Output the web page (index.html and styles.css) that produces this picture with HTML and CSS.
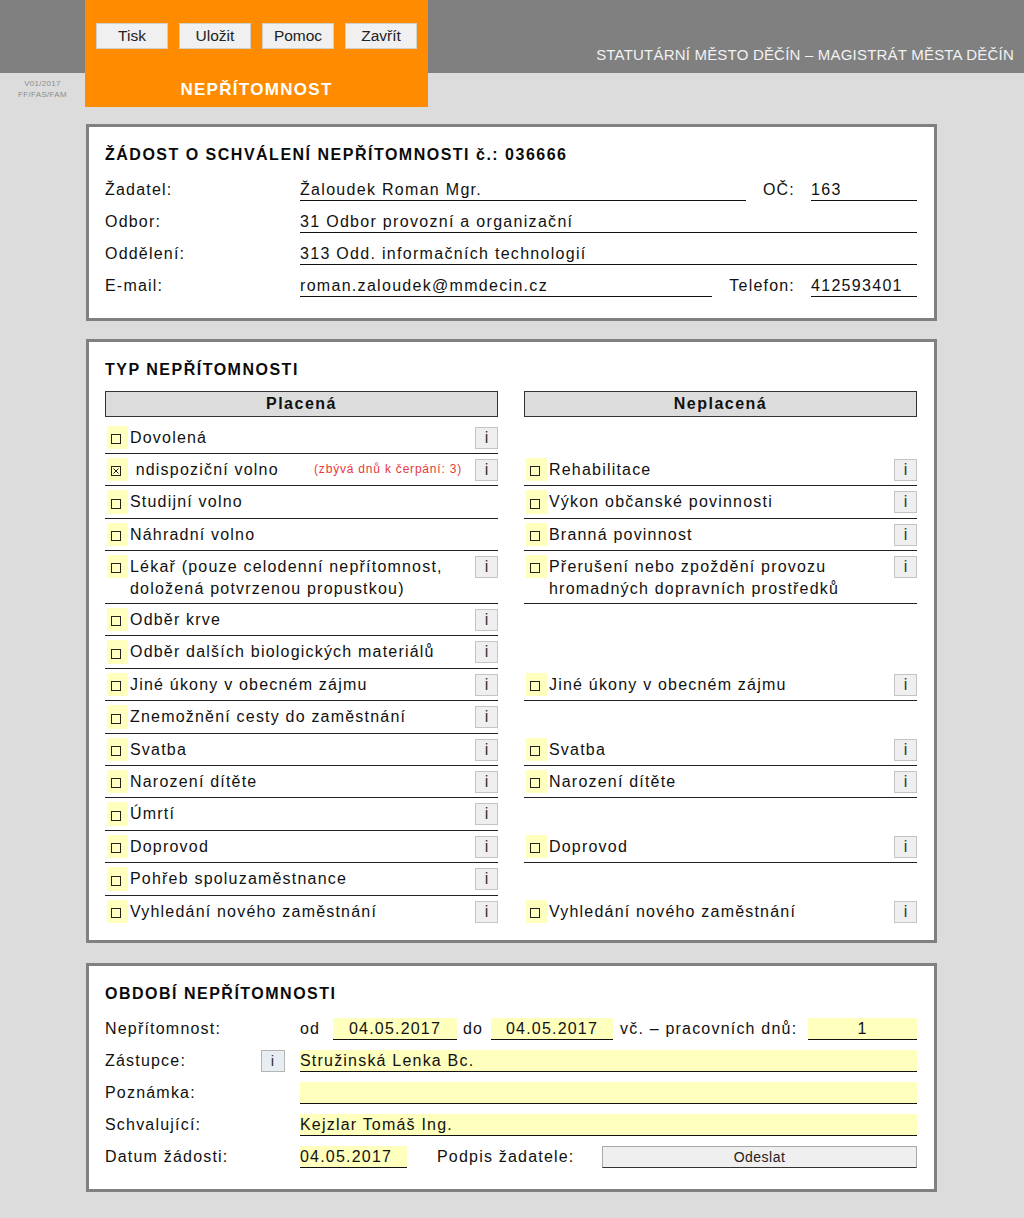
FILE: index.html
```html
<!DOCTYPE html>
<html lang="cs">
<head>
<meta charset="utf-8">
<title>Nepřítomnost</title>
<link rel="stylesheet" href="styles.css">
</head>
<body>
<header class="top">
  <div class="version">V01/2017<br>FF/FAS/FAM</div>
  <div class="appbox">
    <div class="toolbar">
      <button class="tbtn">Tisk</button>
      <button class="tbtn">Uložit</button>
      <button class="tbtn">Pomoc</button>
      <button class="tbtn">Zavřít</button>
    </div>
    <div class="apptitle">NEPŘÍTOMNOST</div>
  </div>
  <div class="org">STATUTÁRNÍ MĚSTO DĚČÍN – MAGISTRÁT MĚSTA DĚČÍN</div>
</header>

<main class="content">
  <section class="card card-request">
    <h2 class="card-title">ŽÁDOST O SCHVÁLENÍ NEPŘÍTOMNOSTI č.: 036666</h2>
    <div class="rows">
      <div class="frow"><span class="flabel">Žadatel:</span><span class="fval">Žaloudek Roman Mgr.</span><span class="slabel">OČ:</span><span class="fval sval">163</span></div>
      <div class="frow"><span class="flabel">Odbor:</span><span class="fval">31 Odbor provozní a organizační</span></div>
      <div class="frow"><span class="flabel">Oddělení:</span><span class="fval">313 Odd. informačních technologií</span></div>
      <div class="frow"><span class="flabel">E-mail:</span><span class="fval">roman.zaloudek@mmdecin.cz</span><span class="slabel">Telefon:</span><span class="fval sval">412593401</span></div>
    </div>
  </section>

  <section class="card card-types">
    <h2 class="card-title">TYP NEPŘÍTOMNOSTI</h2>
    <div class="types">
      <div class="colhead">Placená</div>
      <div class="colhead">Neplacená</div>

      <div class="opt"><span class="cb"><i class="box"></i></span><span class="otext">Dovolená</span><span class="info">i</span></div>
      <div class="opt empty"></div>

      <div class="opt"><span class="cb"><svg class="boxx" width="10" height="10" viewBox="0 0 10 10"><rect x="0.5" y="0.5" width="9" height="9" fill="none" stroke="#222"/><path d="M2.5 2.5L7.5 7.5M7.5 2.5L2.5 7.5" stroke="#222" stroke-width="1"/></svg></span><span class="otext">&nbsp;ndispoziční volno</span><span class="note">(zbývá dnů k čerpání: 3)</span><span class="info">i</span></div>
      <div class="opt"><span class="cb"><i class="box"></i></span><span class="otext">Rehabilitace</span><span class="info">i</span></div>

      <div class="opt"><span class="cb"><i class="box"></i></span><span class="otext">Studijní volno</span></div>
      <div class="opt"><span class="cb"><i class="box"></i></span><span class="otext">Výkon občanské povinnosti</span><span class="info">i</span></div>

      <div class="opt"><span class="cb"><i class="box"></i></span><span class="otext">Náhradní volno</span></div>
      <div class="opt"><span class="cb"><i class="box"></i></span><span class="otext">Branná povinnost</span><span class="info">i</span></div>

      <div class="opt"><span class="cb"><i class="box"></i></span><span class="otext">Lékař (pouze celodenní nepřítomnost,<br>doložená potvrzenou propustkou)</span><span class="info">i</span></div>
      <div class="opt"><span class="cb"><i class="box"></i></span><span class="otext">Přerušení nebo zpoždění provozu<br>hromadných dopravních prostředků</span><span class="info">i</span></div>

      <div class="opt"><span class="cb"><i class="box"></i></span><span class="otext">Odběr krve</span><span class="info">i</span></div>
      <div class="opt empty"></div>

      <div class="opt"><span class="cb"><i class="box"></i></span><span class="otext">Odběr dalších biologických materiálů</span><span class="info">i</span></div>
      <div class="opt empty"></div>

      <div class="opt"><span class="cb"><i class="box"></i></span><span class="otext">Jiné úkony v obecném zájmu</span><span class="info">i</span></div>
      <div class="opt"><span class="cb"><i class="box"></i></span><span class="otext">Jiné úkony v obecném zájmu</span><span class="info">i</span></div>

      <div class="opt"><span class="cb"><i class="box"></i></span><span class="otext">Znemožnění cesty do zaměstnání</span><span class="info">i</span></div>
      <div class="opt empty"></div>

      <div class="opt"><span class="cb"><i class="box"></i></span><span class="otext">Svatba</span><span class="info">i</span></div>
      <div class="opt"><span class="cb"><i class="box"></i></span><span class="otext">Svatba</span><span class="info">i</span></div>

      <div class="opt"><span class="cb"><i class="box"></i></span><span class="otext">Narození dítěte</span><span class="info">i</span></div>
      <div class="opt"><span class="cb"><i class="box"></i></span><span class="otext">Narození dítěte</span><span class="info">i</span></div>

      <div class="opt"><span class="cb"><i class="box"></i></span><span class="otext">Úmrtí</span><span class="info">i</span></div>
      <div class="opt empty"></div>

      <div class="opt"><span class="cb"><i class="box"></i></span><span class="otext">Doprovod</span><span class="info">i</span></div>
      <div class="opt"><span class="cb"><i class="box"></i></span><span class="otext">Doprovod</span><span class="info">i</span></div>

      <div class="opt"><span class="cb"><i class="box"></i></span><span class="otext">Pohřeb spoluzaměstnance</span><span class="info">i</span></div>
      <div class="opt empty"></div>

      <div class="opt last"><span class="cb"><i class="box"></i></span><span class="otext">Vyhledání nového zaměstnání</span><span class="info">i</span></div>
      <div class="opt last"><span class="cb"><i class="box"></i></span><span class="otext">Vyhledání nového zaměstnání</span><span class="info">i</span></div>
    </div>
  </section>

  <section class="card card-period">
    <h2 class="card-title">OBDOBÍ NEPŘÍTOMNOSTI</h2>
    <div class="rows">
      <div class="frow prow">
        <span class="flabel">Nepřítomnost:</span>
        <span class="word w-od">od</span>
        <span class="yfield date1">04.05.2017</span>
        <span class="word w-do">do</span>
        <span class="yfield date2">04.05.2017</span>
        <span class="word w-vc">vč. – pracovních dnů:</span>
        <span class="yfield days">1</span>
      </div>
      <div class="frow prow">
        <span class="flabel labbtn">Zástupce:<span class="info info2">i</span></span>
        <span class="yfield grow">Stružinská Lenka Bc.</span>
      </div>
      <div class="frow prow">
        <span class="flabel">Poznámka:</span>
        <span class="yfield grow">&nbsp;</span>
      </div>
      <div class="frow prow">
        <span class="flabel">Schvalující:</span>
        <span class="yfield grow">Kejzlar Tomáš Ing.</span>
      </div>
      <div class="frow prow">
        <span class="flabel">Datum žádosti:</span>
        <span class="yfield date3">04.05.2017</span>
        <span class="word w-sig">Podpis žadatele:</span>
        <button class="send">Odeslat</button>
      </div>
    </div>
  </section>
</main>
</body>
</html>
```

FILE: styles.css
```css
* { box-sizing: border-box; }
html, body { margin: 0; padding: 0; }
body {
  background: #dcdcdc;
  font-family: "Liberation Sans", Arial, sans-serif;
  font-size: 16px;
  color: #111;
}

/* ---------- header ---------- */
.top {
  display: grid;
  grid-template-columns: 85px 343px 1fr;
  grid-template-rows: 73px 34px;
  background: linear-gradient(to bottom, #808080 0, #808080 73px, #dcdcdc 73px);
}
.version {
  grid-column: 1;
  grid-row: 2;
  text-align: center;
  font-size: 8px;
  line-height: 10.5px;
  padding-top: 6px;
  color: #8c8c8c;
  letter-spacing: 0.3px;
}
.appbox {
  grid-column: 2;
  grid-row: 1 / span 2;
  background: #ff8c00;
  padding: 23px 11px 0;
}
.toolbar { display: flex; gap: 11px; }
.tbtn {
  width: 72px;
  height: 26px;
  padding: 0;
  background: #f0f0f0;
  border: 1px solid #cfcfcf;
  font-family: "Liberation Sans", Arial, sans-serif;
  font-size: 15.5px;
  color: #222;
}
.apptitle {
  margin-top: 31px;
  text-align: center;
  color: #fff;
  font-weight: bold;
  font-size: 17px;
  line-height: 20px;
  letter-spacing: 1.3px;
}
.org {
  grid-column: 3;
  grid-row: 1;
  align-self: end;
  text-align: right;
  color: #f2f2f2;
  font-size: 15px;
  line-height: 18px;
  letter-spacing: 0.2px;
  padding: 0 10px 9px 0;
}

/* ---------- cards ---------- */
.content { margin-left: 86px; width: 851px; padding-bottom: 20px; }
.card {
  background: #fff;
  border: 3px solid #808080;
  padding: 18px 17px 21px 16px;
}
.card-request { margin-top: 17px; }
.card-types { margin-top: 18px; padding-bottom: 13px; }
.card-period { margin-top: 20px; }
.card-title {
  margin: 0;
  font-size: 16px;
  line-height: 20px;
  font-weight: bold;
  letter-spacing: 1.5px;
  color: #0a0a0a;
}

/* form rows */
.rows { margin-top: 4px; }
.frow { display: flex; align-items: flex-end; height: 32px; }
.flabel {
  width: 195px;
  flex: none;
  line-height: 20px;
  padding-bottom: 1px;
  letter-spacing: 1.2px;
}
.fval {
  flex: 1;
  line-height: 20px;
  border-bottom: 1px solid #111;
  letter-spacing: 1.3px;
  white-space: nowrap;
}
.slabel {
  flex: none;
  margin: 0 16px 0 17px;
  line-height: 20px;
  padding-bottom: 1px;
  letter-spacing: 1.2px;
}
.sval { flex: none; width: 106px; }

/* ---------- types ---------- */
.types {
  display: grid;
  grid-template-columns: 393px 393px;
  column-gap: 26px;
  margin-top: 11px;
}
.colhead {
  height: 26px;
  border: 1px solid #333;
  background: #dcdcdc;
  text-align: center;
  font-weight: bold;
  line-height: 24px;
  letter-spacing: 1.5px;
  margin-bottom: 4.5px;
}
.opt {
  display: flex;
  align-items: flex-start;
  padding: 4px 0;
  border-bottom: 1px solid #222;
}
.opt.empty, .opt.last { border-bottom: 0; }
.cb {
  flex: none;
  width: 21px;
  height: 23.4px;
  margin: 0 2px;
  background: #ffffbe;
  display: flex;
  align-items: flex-end;
  padding: 0 0 5px 4px;
}
.box {
  display: block;
  width: 10px;
  height: 10px;
  border: 1px solid #222;
}
.boxx { display: block; }
.otext {
  flex: 1;
  padding-top: 1px;
  line-height: 21.5px;
  letter-spacing: 1.2px;
  white-space: nowrap;
}
.note {
  flex: none;
  padding-top: 1px;
  line-height: 21.5px;
  font-size: 12px;
  color: #e8383d;
  letter-spacing: 0.8px;
  margin-right: 13px;
}
.info {
  flex: none;
  display: block;
  width: 23px;
  height: 22px;
  margin-top: 1px;
  background: #efefef;
  border: 1px solid #c4c4c4;
  text-align: center;
  line-height: 20px;
  font-size: 16px;
  color: #333;
}

/* ---------- period ---------- */
.prow .flabel { line-height: 21px; }
.labbtn { display: flex; align-items: flex-end; padding-bottom: 1px; }
.info2 {
  width: 24px;
  margin: 0 15px -1px auto;
  background: #e8edf2;
  border-color: #b4b4b4;
  font-size: 15px;
}
.word {
  flex: none;
  line-height: 21px;
  padding-bottom: 1px;
  letter-spacing: 1.2px;
  white-space: nowrap;
}
.w-od { width: 33px; }
.w-do { width: 34px; padding-left: 6px; }
.w-vc { width: 195px; padding-left: 7px; }
.w-sig { width: 195px; padding-left: 30px; }
.yfield {
  background: #ffffbe;
  border-bottom: 1px solid #111;
  line-height: 21px;
  letter-spacing: 1.2px;
  white-space: nowrap;
}
.date1 { flex: none; width: 124px; text-align: center; }
.date2 { flex: none; width: 122px; text-align: center; }
.date3 { flex: none; width: 107px; }
.days { flex: 1; text-align: center; }
.grow { flex: 1; }
.send {
  flex: 1;
  height: 22px;
  padding: 0;
  background: #efefef;
  border: 1px solid #a8a8a8;
  border-bottom-color: #333;
  font-family: "Liberation Sans", Arial, sans-serif;
  font-size: 14px;
  letter-spacing: 0.5px;
  color: #222;
}
```
